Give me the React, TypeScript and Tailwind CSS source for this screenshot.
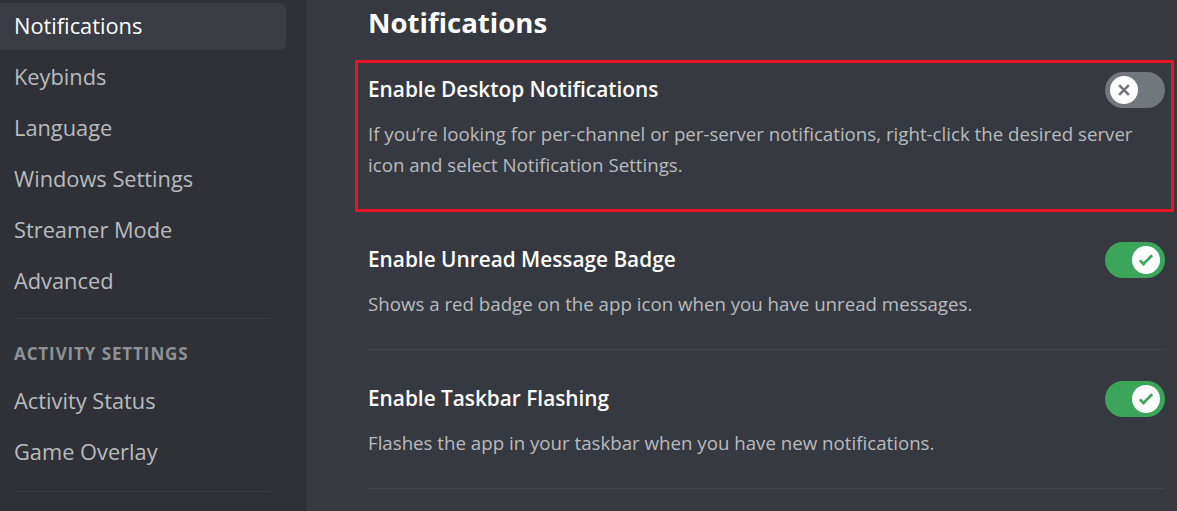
import React from "react";

const font = { fontFamily: '"Open Sans", "Noto Sans", Arial, sans-serif' };

function SideItem({ label, selected }: { label: string; selected?: boolean }) {
  return (
    <div
      className={`h-[47px] mb-[4px] flex items-center pl-[14px] rounded-r-[6px] text-[21.8px] ${
        selected ? "bg-[#393c43] text-white" : "text-[#b9bbbe]"
      }`}
    >
      {label}
    </div>
  );
}

function Toggle({ on }: { on: boolean }) {
  return (
    <div
      className={`relative w-[60px] h-[36px] rounded-full shrink-0 ${
        on ? "bg-[#3ba55c]" : "bg-[#72767d]"
      }`}
    >
      <div
        className={`absolute top-[4px] w-[28px] h-[28px] rounded-full bg-white flex items-center justify-center ${
          on ? "right-[5px]" : "left-[5px]"
        }`}
      >
        {on ? (
          <svg viewBox="0 0 20 20" className="w-[24px] h-[24px]">
            <path fill="#3ba55c" d="M7.89561 14.8538L6.30462 13.2629L14.3099 5.25755L15.9009 6.84854L7.89561 14.8538Z" />
            <path fill="#3ba55c" d="M4.08643 11.0903L5.67742 9.49929L9.4485 13.2704L7.85751 14.8614L4.08643 11.0903Z" />
          </svg>
        ) : (
          <svg viewBox="0 0 20 20" className="w-[24px] h-[24px]">
            <path fill="#72767d" d="M5.13231 6.72963L6.7233 5.13864L14.855 13.2704L13.264 14.8614L5.13231 6.72963Z" />
            <path fill="#72767d" d="M13.2704 5.13864L14.8614 6.72963L6.72963 14.8614L5.13864 13.2704L13.2704 5.13864Z" />
          </svg>
        )}
      </div>
    </div>
  );
}

function Setting({
  title,
  lines,
  on,
}: {
  title: string;
  lines: string[];
  on: boolean;
}) {
  return (
    <div className="mb-[31px]">
      <div className="h-[36px] flex items-center justify-between">
        <div className="text-[20.8px] font-semibold text-white">{title}</div>
        <Toggle on={on} />
      </div>
      <div className="mt-[10px] text-[18.7px] leading-[31px] text-[#b9bbbe]">
        {lines.map((l) => (
          <div key={l}>{l}</div>
        ))}
      </div>
      <div className="mt-[30px] h-px bg-[#43464c]" />
    </div>
  );
}

export default function App() {
  return (
    <div className="w-[1177px] h-[511px] flex overflow-hidden bg-[#36393f]" style={font}>
      <div className="w-[307px] shrink-0 bg-[#2f3136] pt-[3px] pr-[21px]">
        <SideItem label="Notifications" selected />
        <SideItem label="Keybinds" />
        <SideItem label="Language" />
        <SideItem label="Windows Settings" />
        <SideItem label="Streamer Mode" />
        <SideItem label="Advanced" />
        <div className="ml-[14px] mr-[16px] mt-[13px] h-px bg-[#3b3e45]" />
        <div className="mt-[23px] pl-[14px] h-[24px] flex items-center text-[17px] font-bold text-[#8e9297] tracking-[0.9px]">
          ACTIVITY SETTINGS
        </div>
        <div className="mt-[12px]">
          <SideItem label="Activity Status" />
          <SideItem label="Game Overlay" />
        </div>
        <div className="ml-[14px] mr-[16px] mt-[15px] h-px bg-[#3b3e45]" />
      </div>
      <div className="relative flex-1 pl-[61px] pr-[12px] pt-[7px]">
        <div className="h-[32px] flex items-center text-[27.6px] font-bold text-white mb-[33px]">
          Notifications
        </div>
        <Setting
          title="Enable Desktop Notifications"
          on={false}
          lines={[
            "If you’re looking for per-channel or per-server notifications, right-click the desired server",
            "icon and select Notification Settings.",
          ]}
        />
        <Setting
          title="Enable Unread Message Badge"
          on={true}
          lines={["Shows a red badge on the app icon when you have unread messages."]}
        />
        <Setting
          title="Enable Taskbar Flashing"
          on={true}
          lines={["Flashes the app in your taskbar when you have new notifications."]}
        />
        <div className="absolute left-[48px] top-[60px] w-[819px] h-[152px] border-[3px] border-[#e81224]" />
      </div>
    </div>
  );
}
